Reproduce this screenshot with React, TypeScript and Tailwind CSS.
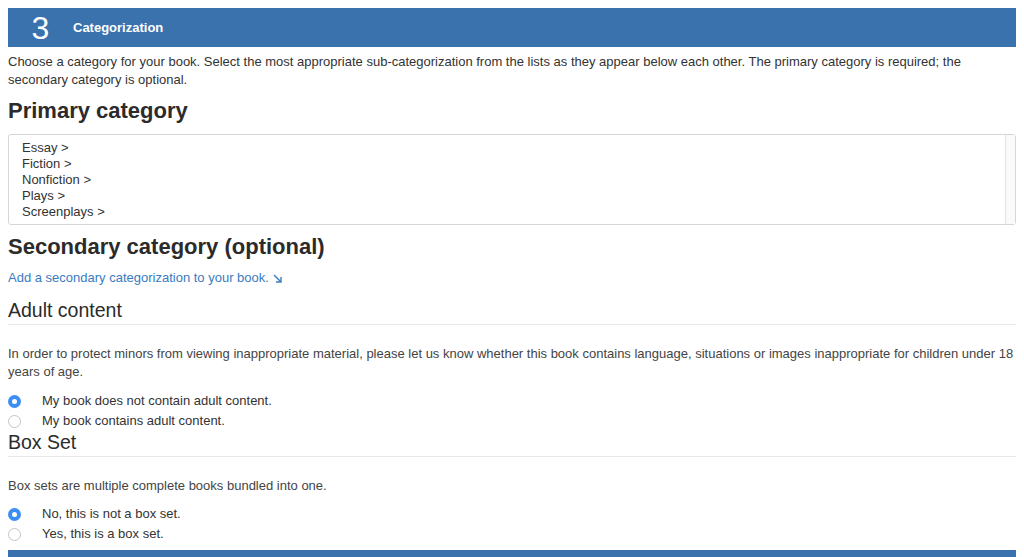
import React from "react";

const primaryCategories = ["Essay", "Fiction", "Nonfiction", "Plays", "Screenplays"];

function SectionBar({ number, title }: { number: string; title: string }) {
  return (
    <div className="flex h-[39px] shrink-0 items-center bg-[#3a72ad] text-white">
      <span className="w-[65px] text-center text-[32px] leading-none">{number}</span>
      <span className="text-[13px] font-bold">{title}</span>
    </div>
  );
}

function Radio({ checked, label }: { checked?: boolean; label: string }) {
  return (
    <label className="flex h-5 items-center text-[13px] text-[#333]">
      <span
        className={`flex h-[13px] w-[13px] items-center justify-center rounded-full ${
          checked ? "bg-[#3b8ef3]" : "border border-[#c4c4c4] bg-white"
        }`}
      >
        {checked && <span className="h-[5px] w-[5px] rounded-full bg-white" />}
      </span>
      <span className="ml-[21px]">{label}</span>
    </label>
  );
}

export default function App() {
  return (
    <div
      className="h-[557px] overflow-hidden bg-white px-2 pt-2 text-[#333]"
      style={{ fontFamily: '"Liberation Sans", Arial, sans-serif' }}
    >
      <SectionBar number="3" title="Categorization" />

      <p className="mt-[6px] text-[13px] leading-[18px]">
        Choose a category for your book. Select the most appropriate sub-categorization from the lists as they appear
        below each other. The primary category is required; the secondary category is optional.
      </p>

      <h2 className="mt-[10px] text-[22px] font-bold leading-[23px] text-[#2b2b2b]">Primary category</h2>

      <div className="mt-[12px] flex h-[91px] rounded-[3px] border border-[#d6d6d6]">
        <ul className="flex-1 pl-[13px] pt-[5px] text-[13px] leading-4">
          {primaryCategories.map((c) => (
            <li key={c}>{c} &gt;</li>
          ))}
        </ul>
        <div className="w-[10px] border-l border-[#e4e4e4] bg-[#fafafa]" />
      </div>

      <h2 className="mt-[11px] text-[22px] font-bold leading-[22px] text-[#2b2b2b]">Secondary category (optional)</h2>

      <a className="mt-[11px] flex items-center text-[13px] leading-[18px] text-[#3a7bc0]">
        Add a secondary categorization to your book.
        <svg className="ml-[4px] h-[9px] w-[9px]" viewBox="0 0 9 9" fill="none" stroke="#3a7bc0" strokeWidth="1.4">
          <path d="M1 1 L7.5 7.5" />
          <path d="M8 3 L8 8 L3 8" />
        </svg>
      </a>

      <h3 className="mt-[13px] border-b border-[#e8e8e8] pb-[4px] text-[19.5px] leading-5 text-[#2b2b2b]">
        Adult content
      </h3>

      <p className="mt-5 text-[13px] leading-[18px] text-[#444]">
        In order to protect minors from viewing inappropriate material, please let us know whether this book contains
        language, situations or images inappropriate for children under 18 years of age.
      </p>

      <div className="mt-[10px]">
        <Radio checked label="My book does not contain adult content." />
        <Radio label="My book contains adult content." />
      </div>

      <h3 className="mt-[1px] border-b border-[#e8e8e8] pb-[4px] text-[19.5px] leading-5 text-[#2b2b2b]">Box Set</h3>

      <p className="mt-[20px] text-[13px] leading-[18px] text-[#444]">
        Box sets are multiple complete books bundled into one.
      </p>

      <div className="mt-[9px]">
        <Radio checked label="No, this is not a box set." />
        <Radio label="Yes, this is a box set." />
      </div>

      <div className="mt-[6px]">
        <SectionBar number="4" title="Pricing" />
      </div>
    </div>
  );
}
